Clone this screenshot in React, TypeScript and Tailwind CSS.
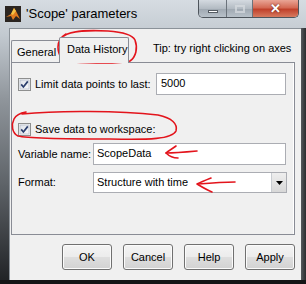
import React from "react";

const font = { fontFamily: '"Liberation Sans", Arial, sans-serif' };

function CheckBox() {
    return (
        <svg width="13" height="13" viewBox="0 0 13 13" className="shrink-0">
            <defs>
                <linearGradient id="cbg" x1="0" y1="0" x2="1" y2="1">
                    <stop offset="0" stopColor="#dfe3ea" />
                    <stop offset="1" stopColor="#f7f8fa" />
                </linearGradient>
            </defs>
            <rect x="0.5" y="0.5" width="12" height="12" fill="#f4f4f4" stroke="#8e8f8f" />
            <rect x="2" y="2" width="9" height="9" fill="url(#cbg)" stroke="#aab3c2" strokeWidth="0.6" />
            <path d="M3.2 6.4 L5.4 9 L9.8 3.4" fill="none" stroke="#2c3f6e" strokeWidth="1.7" />
        </svg>
    );
}

function DlgButton({ label }: { label: string }) {
    return (
        <button className="w-[50px] h-[26px] rounded-[3px] border border-[#707070] bg-[linear-gradient(#f4f4f4,#ececec_48%,#dedede_52%,#d2d2d2)] text-[11px] text-black shadow-[inset_0_0_0_1px_#fbfbfb]">
            {label}
        </button>
    );
}

function MatlabIcon() {
    return (
        <svg width="16" height="16" viewBox="0 0 16 16">
            <rect width="16" height="16" fill="#2b2521" />
            <path d="M1 11 L6 8 L9 2 L11 5 L15 13 L11 10 L8 14 L6 10 Z" fill="#e07b1e" />
            <path d="M9 2 L11 5 L8 9 L6 8 Z" fill="#f4c244" />
        </svg>
    );
}

function Annotations() {
    return (
        <svg
            width="306"
            height="284"
            viewBox="0 0 306 284"
            className="absolute left-0 top-0 pointer-events-none"
            fill="none"
            stroke="#e3141c"
            strokeWidth="1.6"
            strokeLinecap="round"
            strokeLinejoin="round"
        >
            {/* Data History tab loop */}
            <path d="M64 36 C70 31 90 30 108 31 C122 32 132 34 135 40 C138 48 136 57 130 61 C118 64 90 63 72 62 C62 61 58 55 58 47 C58 41 61 37 66 34" />
            {/* Save data loop */}
            <path d="M22 114 C60 110 120 111 158 115 C172 118 178 124 176 131 C172 139 150 140 110 139 C70 139 30 139 18 136 C12 133 11 125 14 119 C16 115 20 113 26 112" />
            {/* arrow after ScopeData */}
            <path d="M176 146 C172 149 168 151 166 153 C169 156 174 158 178 158" />
            <path d="M166 153 C175 153 186 152 197 151" />
            {/* arrow after Structure with time */}
            <path d="M211 178 C206 180 201 182 197 184 C202 187 207 190 212 192" />
            <path d="M198 184 C210 183 222 182 235 182" />
        </svg>
    );
}

export default function App() {
    return (
        <div
            className="relative w-[306px] h-[284px] flex flex-col overflow-hidden bg-[linear-gradient(#d6dce2,#c3cad1_12%,#8f959b_35%,#5e6368_65%,#1f2124)]"
            style={font}
        >
            {/* Title bar */}
            <div className="h-[28px] flex items-start shrink-0">
                <div className="ml-[5px] mt-[6px]">
                    <MatlabIcon />
                </div>
                <div className="ml-[5px] text-[13px] leading-[28px] text-black">'Scope' parameters</div>
                <div className="ml-auto mr-[7px] flex h-[18px] rounded-b-[5px] border border-t-0 border-[#4e555c] overflow-hidden">
                    <div className="w-[28px] h-full flex items-end justify-center pb-[4px] bg-[linear-gradient(#d4dae0,#b3bbc3_50%,#9ea7b0_51%,#b8c1c9)] border-r border-[#6b737b]">
                        <div className="w-[10px] h-[3px] bg-white border border-[#555c63]" />
                    </div>
                    <div className="w-[26px] h-full flex items-center justify-center bg-[linear-gradient(#d4dae0,#b3bbc3_50%,#9ea7b0_51%,#b8c1c9)] border-r border-[#6b737b]">
                        <div className="w-[10px] h-[8px] border-2 border-[#d9dde1] opacity-70" />
                    </div>
                    <div className="w-[45px] h-full flex items-center justify-center bg-[linear-gradient(#e9a596,#d46a55_45%,#c0412b_55%,#d77a5f)]">
                        <span className="text-white text-[13px] font-bold leading-none [text-shadow:0_0_2px_#5a1a10]">✕</span>
                    </div>
                </div>
            </div>

            {/* Body */}
            <div className="flex flex-1">
                <div className="w-[9px] shrink-0" />
                <div className="flex-1 flex flex-col bg-[#f0f0f0] border-t border-l border-[#8b9299]">
                    {/* Tabs row */}
                    <div className="h-[33px] flex items-end pl-[1px] shrink-0">
                        <div className="w-[48px] h-[22px] border-l border-t border-[#898c95] rounded-tl-[2px] text-[11px] text-black pl-[5px] pt-[3px] bg-[#f0f0f0]">
                            General
                        </div>
                        <div className="relative z-10 w-[70px] h-[26px] -mb-px border-l border-t border-r border-[#898c95] rounded-t-[2px] bg-[#f0f0f0] text-[11px] text-black pl-[7px] pt-[3px]">
                            Data History
                        </div>
                        <div className="ml-[24px] mb-[7px] text-[11px] text-black leading-[13px]">
                            Tip: try right clicking on axes
                        </div>
                    </div>

                    {/* Panel */}
                    <div className="ml-[1px] w-[284px] h-[173px] border border-[#898c95] shadow-[inset_-1px_0_0_#ffffff] shrink-0">
                        <div className="mt-[10px] h-[22px] flex items-center">
                            <div className="ml-[6px]">
                                <CheckBox />
                            </div>
                            <span className="ml-[4px] w-[121px] text-[11px] text-black">Limit data points to last:</span>
                            <div className="w-[130px] h-[22px] border border-[#abadb3] bg-white text-[11px] text-black pl-[4px] leading-[18px]">
                                5000
                            </div>
                        </div>

                        <div className="mt-[28px] h-[13px] flex items-center">
                            <div className="ml-[6px]">
                                <CheckBox />
                            </div>
                            <span className="ml-[4px] text-[11px] text-black">Save data to workspace:</span>
                        </div>

                        <div className="mt-[7px] h-[22px] flex items-center">
                            <span className="ml-[6px] w-[75px] text-[11px] text-black">Variable name:</span>
                            <div className="w-[193px] h-[22px] border border-[#abadb3] bg-white text-[11px] text-black pl-[3px] leading-[18px]">
                                ScopeData
                            </div>
                        </div>

                        <div className="mt-[7px] h-[21px] flex items-center">
                            <span className="ml-[6px] w-[75px] text-[11px] text-black">Format:</span>
                            <div className="w-[194px] h-[21px] border border-[#abadb3] bg-white flex items-center">
                                <span className="flex-1 text-[11px] text-black pl-[3px]">Structure with time</span>
                                <div className="w-[15px] h-full flex items-center justify-center bg-[linear-gradient(#eeeeee,#d8d8d8)] border-l border-[#c9cdd2]">
                                    <svg width="7" height="4" viewBox="0 0 7 4">
                                        <path d="M0 0 H7 L3.5 4 Z" fill="#000" />
                                    </svg>
                                </div>
                            </div>
                        </div>
                    </div>

                    {/* Buttons */}
                    <div className="mt-[9px] flex justify-end gap-[11px] pr-[6px]">
                        <DlgButton label="OK" />
                        <DlgButton label="Cancel" />
                        <DlgButton label="Help" />
                        <DlgButton label="Apply" />
                    </div>
                </div>
                <div className="w-[5px] shrink-0 bg-[linear-gradient(90deg,#55595d,#2a2c2e)]" />
            </div>
            <div className="h-[4px] shrink-0 bg-[#141516]" />

            <Annotations />
        </div>
    );
}
